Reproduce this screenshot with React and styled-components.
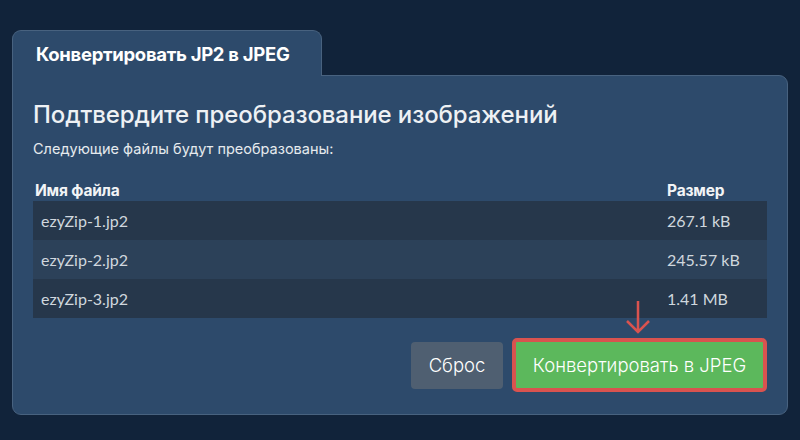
import React from "react";
import styled, { createGlobalStyle } from "styled-components";

const GlobalStyle = createGlobalStyle`
  html, body {
    margin: 0;
    padding: 0;
    background: #11233a;
  }
  body {
    font-family: Inter, "Noto Sans", sans-serif;
    color: #fff;
  }
`;

const Page = styled.div`
  width: 800px;
  height: 440px;
  box-sizing: border-box;
  padding: 30px 12px 0 12px;
`;

const Tab = styled.div`
  width: 310px;
  height: 46px;
  box-sizing: border-box;
  background: #2d4a6b;
  border: 1px solid #48627f;
  border-bottom: none;
  border-radius: 9px 9px 0 0;
  display: flex;
  align-items: center;
  padding-left: 23px;
  font-size: 18.5px;
  font-weight: 700;
  letter-spacing: -0.3px;
  position: relative;
  z-index: 1;
  margin-bottom: -1px;
`;

const Panel = styled.div`
  height: 340px;
  box-sizing: border-box;
  background: #2d4a6b;
  border: 1px solid #48627f;
  border-radius: 0 9px 9px 9px;
  padding: 23px 20px 0 20px;
  display: flex;
  flex-direction: column;
`;

const Heading = styled.h2`
  margin: 0;
  font-size: 24px;
  font-weight: 500;
  color: #eef1f4;
  letter-spacing: -0.1px;
  line-height: 32px;
`;

const Lead = styled.p`
  margin: 9px 0 0 0;
  font-size: 14.5px;
  color: #e6eaee;
  line-height: 18px;
`;

const Table = styled.div`
  margin-top: 23px;
`;

const Row = styled.div`
  display: grid;
  grid-template-columns: 1fr 100px;
  height: ${p => (p.$head ? "20px" : "39px")};
  padding-left: ${p => (p.$head ? "2px" : "8px")};
  background: ${p => (p.$head ? "transparent" : p.$odd ? "#26374b" : "#2c4159")};
  font-family: ${p => (p.$head ? 'Inter, "Noto Sans", sans-serif' : 'Lato, "Noto Sans", sans-serif')};
  font-size: ${p => (p.$head ? "15.5px" : "16px")};
  font-weight: ${p => (p.$head ? 700 : 400)};
  color: ${p => (p.$head ? "#f2f4f6" : "#d0d7de")};
  align-items: ${p => (p.$head ? "start" : "center")};
  letter-spacing: ${p => (p.$head ? "-0.2px" : "0")};
`;

const Cell = styled.div`
  white-space: nowrap;
`;

const Actions = styled.div`
  display: flex;
  justify-content: flex-end;
  align-items: center;
  gap: 9px;
  margin-top: 20px;
  position: relative;
`;

const Button = styled.button`
  font-family: Inter, "Noto Sans", sans-serif;
  font-size: 18.5px;
  font-weight: 300;
  color: #fff;
  border: none;
  border-radius: 4px;
  cursor: pointer;
`;

const ResetButton = styled(Button)`
  background: #4f5f71;
  height: 47px;
  width: 92px;
  padding: 0;
`;

const ConvertButton = styled(Button)`
  background: #5cb85c;
  height: 54px;
  width: 255px;
  padding: 0;
  border: 4px solid #d9534f;
  border-radius: 5px;
`;

const Arrow = styled.svg`
  position: absolute;
  left: 591px;
  top: -38px;
`;

const files = [
  { name: "ezyZip-1.jp2", size: "267.1 kB" },
  { name: "ezyZip-2.jp2", size: "245.57 kB" },
  { name: "ezyZip-3.jp2", size: "1.41 MB" },
];

export default function App() {
  return (
    <>
      <GlobalStyle />
      <Page>
        <Tab>Конвертировать JP2 в JPEG</Tab>
        <Panel>
          <Heading>Подтвердите преобразование изображений</Heading>
          <Lead>Следующие файлы будут преобразованы:</Lead>
          <Table>
            <Row $head>
              <Cell>Имя файла</Cell>
              <Cell>Размер</Cell>
            </Row>
            {files.map((f, i) => (
              <Row key={f.name} $odd={i % 2 === 0}>
                <Cell>{f.name}</Cell>
                <Cell>{f.size}</Cell>
              </Row>
            ))}
          </Table>
          <Actions>
            <Arrow width="28" height="34" viewBox="0 0 28 34">
              <path d="M14 1 V32 M3 21 L14 32 L25 21" fill="none" stroke="#d9534f" strokeWidth="2.5" />
            </Arrow>
            <ResetButton>Сброс</ResetButton>
            <ConvertButton>Конвертировать в JPEG</ConvertButton>
          </Actions>
        </Panel>
      </Page>
    </>
  );
}
